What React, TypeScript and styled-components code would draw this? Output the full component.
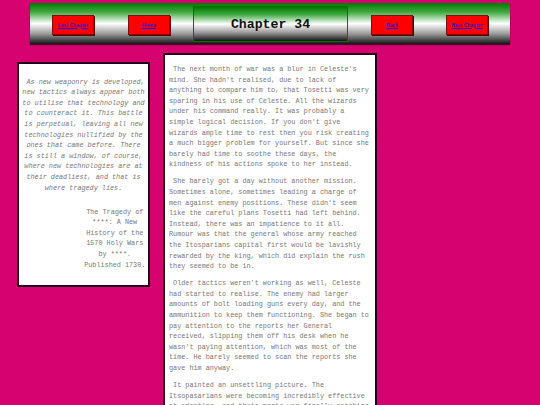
import React from "react";
import styled, {createGlobalStyle} from "styled-components";

const GlobalStyle = createGlobalStyle`
    html, body {
        margin: 0;
        padding: 0;
        background: #d5026f;
        overflow: hidden;
    }
    #root {
        width: 540px;
        height: 405px;
    }
`

const gradient = `linear-gradient(to bottom, #007800 0%, #3fa83f 22%, #ffffff 50%, #9a9a9a 75%, #141414 100%)`

const Page = styled.div`
    width: 540px;
    height: 405px;
    box-sizing: border-box;
    padding-top: 3px;
    font-family: "Liberation Mono", "Courier New", monospace;
`

const NavBar = styled.div`
    width: 480px;
    height: 41px;
    margin: 0 auto;
    box-sizing: border-box;
    padding: 0 22px;
    display: flex;
    align-items: center;
    gap: 23px;
    background: ${gradient};
    box-shadow: 0 1px 1px #4a0028;
`

const NavGroup = styled.div<{ $gap: number }>`
    display: flex;
    align-items: center;
    gap: ${p => p.$gap}px;
    margin-top: 2px;
`

const NavButton = styled.div`
    width: 42px;
    height: 20px;
    box-sizing: border-box;
    display: flex;
    align-items: center;
    justify-content: center;
    background: #ff0000;
    border: 1px solid #7a0d0d;
    box-shadow: 1px 1px 0 #5a0000;
    a {
        font-family: "Liberation Sans", Arial, sans-serif;
        font-weight: bold;
        font-size: 5px;
        color: #2b16c9;
        text-decoration: underline;
        white-space: nowrap;
    }
`

const TitleBox = styled.div`
    width: 156px;
    height: 36px;
    margin-top: 1px;
    box-sizing: border-box;
    display: flex;
    align-items: center;
    justify-content: center;
    border: 1.5px solid #0b6e0b;
    background: ${gradient};
    h1 {
        margin: 0;
        font-family: "Liberation Mono", "Courier New", monospace;
        font-weight: bold;
        font-size: 13.2px;
        color: #111;
    }
`

const Columns = styled.div`
    display: flex;
    align-items: flex-start;
    padding-left: 17px;
    gap: 13px;
    margin-top: 9px;
`

const QuoteBox = styled.aside`
    width: 133px;
    margin-top: 9px;
    box-sizing: border-box;
    padding: 12.7px 2px 14.7px;
    background: #fff;
    border: 2px solid #26001a;
    font-size: 6.8px;
    line-height: 10.6px;
    color: #787878;
`

const Quote = styled.p`
    margin: 0;
    font-style: italic;
    text-align: center;
    text-indent: 0.6em;
`

const Source = styled.p`
    width: 50%;
    margin: 13.4px 0 0 auto;
    text-align: center;
`

const Story = styled.main`
    width: 214px;
    height: 400px;
    box-sizing: border-box;
    padding: 9px 4px 0;
    background: #fff;
    border: 2px solid #26001a;
    border-bottom: none;
    font-size: 6.8px;
    line-height: 10.6px;
    color: #787878;
    overflow: hidden;
`

const Para = styled.p`
    margin: 0 0 6.5px;
    text-indent: 0.6em;
`

const paragraphs = [
    "The next month of war was a blur in Celeste's mind. She hadn't realised, due to lack of anything to compare him to, that Tosetti was very sparing in his use of Celeste. All the wizards under his command really. It was probably a simple logical decision. If you don't give wizards ample time to rest then you risk creating a much bigger problem for yourself. But since she barely had time to soothe these days, the kindness of his actions spoke to her instead.",
    "She barely got a day without another mission. Sometimes alone, sometimes leading a charge of men against enemy positions. These didn't seem like the careful plans Tosetti had left behind. Instead, there was an impatience to it all. Rumour was that the general whose army reached the Itosparians capital first would be lavishly rewarded by the king, which did explain the rush they seemed to be in.",
    "Older tactics weren't working as well, Celeste had started to realise. The enemy had larger amounts of bolt loading guns every day, and the ammunition to keep them functioning. She began to pay attention to the reports her General received, slipping them off his desk when he wasn't paying attention, which was most of the time. He barely seemed to scan the reports she gave him anyway.",
    "It painted an unsettling picture. The Itsopasarians were becoming incredibly effective at adapting, and their magic was finally catching up with them.",
]

export default function App() {
    return (
        <Page>
            <GlobalStyle/>
            <NavBar>
                <NavGroup $gap={34}>
                    <NavButton><a>Last Chapter</a></NavButton>
                    <NavButton><a>Home</a></NavButton>
                </NavGroup>
                <TitleBox><h1>Chapter 34</h1></TitleBox>
                <NavGroup $gap={33}>
                    <NavButton><a>Back</a></NavButton>
                    <NavButton><a>Next Chapter</a></NavButton>
                </NavGroup>
            </NavBar>
            <Columns>
                <QuoteBox>
                    <Quote>
                        As new weaponry is developed, new tactics always appear both to utilise that technology and
                        to counteract it. This battle is perpetual, leaving all new technologies nullified by the
                        ones that came before. There is still a window, of course, where new technologies are at
                        their deadliest, and that is where tragedy lies.
                    </Quote>
                    <Source>The Tragedy of ****: A New History of the 1570 Holy Wars by ****. Published 1730.</Source>
                </QuoteBox>
                <Story>
                    {paragraphs.map((t, i) => <Para key={i}>{t}</Para>)}
                </Story>
            </Columns>
        </Page>
    )
}
